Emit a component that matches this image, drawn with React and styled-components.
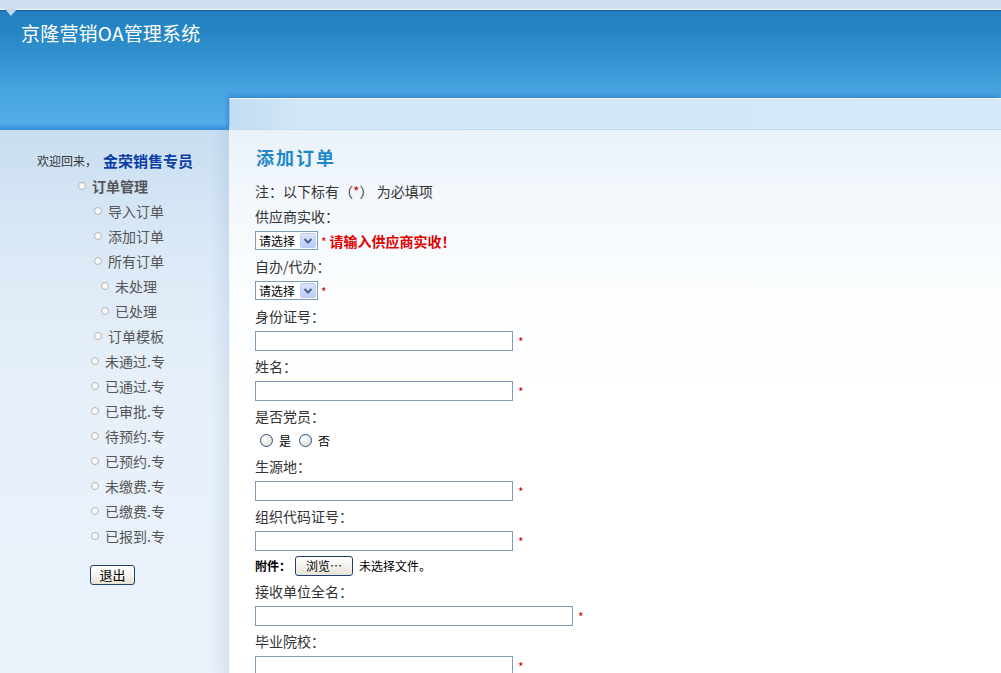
import React from "react";
import styled, { createGlobalStyle } from "styled-components";

const GlobalStyle = createGlobalStyle`
  html, body { margin: 0; padding: 0; }
  body {
    font-family: "Noto Sans CJK SC", "Noto Sans", sans-serif;
    background: #fff;
    overflow: hidden;
  }
  * { box-sizing: border-box; }
`;

const Page = styled.div`
  width: 1001px;
  height: 673px;
  overflow: hidden;
  display: flex;
  flex-direction: column;
`;

const TopStrip = styled.div`
  height: 10px;
  flex: none;
  background: #cfe0f0;
  border-bottom: 1px solid #f3f8fc;
  position: relative;
  &::after {
    content: "";
    position: absolute;
    left: 5px;
    top: 9px;
    border-left: 6px solid transparent;
    border-right: 6px solid transparent;
    border-top: 7px solid #c2d7ec;
    z-index: 3;
  }
`;

const Banner = styled.div`
  height: 88px;
  flex: none;
  border-top: 1px solid #1a5a96;
  background: linear-gradient(#2280c0 0%, #2686c4 25%, #3592d0 55%, #45a1de 85%, #4aa6e2 100%);
`;

const SiteTitle = styled.div`
  color: #fff;
  font-size: 19px;
  line-height: 24px;
  padding: 10px 0 0 21px;
  letter-spacing: 0.2px;
`;

const Body = styled.div`
  flex: 1;
  min-height: 0;
  display: flex;
`;

const LeftCol = styled.div`
  width: 229px;
  flex: none;
  display: flex;
  flex-direction: column;
`;

const BlueTail = styled.div`
  height: 32px;
  flex: none;
  background: linear-gradient(#4aa7e3 0%, #52ace8 80%, #3f97dc 92%, #3a8fd6 100%);
`;

const Sidebar = styled.div`
  flex: 1;
  padding-top: 18px;
  background:
    linear-gradient(to right, rgba(255,255,255,0) 92%, rgba(140,175,210,0.22) 100%),
    linear-gradient(#c9def1 0px, #dbe9f6 120px, #e7f0f9 260px, #eaf2fa 100%);
`;

const Welcome = styled.div`
  height: 25px;
  display: flex;
  align-items: center;
  padding-left: 37px;
  font-size: 12px;
  color: #333;
`;

const UserName = styled.span`
  margin-left: 6px;
  font-size: 15px;
  font-weight: bold;
  color: #0d3ea8;
`;

const MenuList = styled.ul`
  list-style: none;
  margin: 0;
  padding: 0;
`;

const MenuItem = styled.li`
  height: 25px;
  display: flex;
  align-items: center;
  padding-left: ${(p) => p.$indent}px;
  font-size: 14px;
  color: #555;
  font-weight: ${(p) => (p.$bold ? "bold" : "normal")};
  &::before {
    content: "";
    width: 6px;
    height: 6px;
    border: 1px solid #b4b4b4;
    border-radius: 50%;
    background: #fafafa;
    margin-right: 6px;
    flex: none;
  }
`;

const LogoutRow = styled.div`
  padding: 13px 0 0 90px;
`;

const XpButton = styled.button`
  height: 20px;
  width: ${(p) => p.$w}px;
  padding: 0;
  border: 1px solid #1f3f6c;
  border-radius: 3px;
  background: linear-gradient(#ffffff 0%, #f4f3ee 50%, #e6e3d6 100%);
  font-family: inherit;
  font-size: ${(p) => p.$fs || 12}px;
  color: #000;
  line-height: 18px;
`;

const RightCol = styled.div`
  flex: 1;
  display: flex;
  flex-direction: column;
  border-left: 1px solid #f2f8fd;
`;

const TabBar = styled.div`
  height: 32px;
  flex: none;
  border-top: 1px solid #eef6fc;
  border-bottom: 1px solid #c4daee;
  background: linear-gradient(to right, #c2dcf2 0px, #d2e7f7 70px, #d5e9f8 100%);
  box-shadow: -2px -2px 4px rgba(25, 90, 170, 0.45);
`;

const Content = styled.div`
  flex: 1;
  padding: 14px 0 0 25px;
  background: linear-gradient(#e9f2f9 0px, #f3f8fc 70px, #fbfdfe 160px, #fff 260px);
`;

const PageTitle = styled.h2`
  margin: 0 0 8px 1px;
  font-size: 18px;
  line-height: 26px;
  letter-spacing: 2px;
  font-weight: bold;
  color: #1f88c9;
`;

const Row = styled.div`
  height: 25px;
  display: flex;
  align-items: center;
  font-size: 14px;
  color: #333;
  white-space: nowrap;
`;

const RedMark = styled.span`
  color: #d40000;
`;

const Star = styled.span`
  color: #d80000;
  font-size: 12px;
  margin-left: ${(p) => p.$ml || 5}px;
  position: relative;
  top: 1px;
`;

const ErrorMsg = styled.span`
  color: #e00000;
  font-weight: bold;
  font-size: 14px;
  margin-left: 3px;
`;

const SelectBox = styled.div`
  width: 63px;
  height: 19px;
  display: flex;
  align-items: center;
  justify-content: space-between;
  border: 1px solid #7f9db9;
  background: #fff;
  font-size: 12px;
  color: #000;
  padding-left: 3px;
`;

const SelectArrow = styled.span`
  width: 16px;
  height: 15px;
  margin-right: 1px;
  display: flex;
  align-items: center;
  justify-content: center;
  border: 1px solid #b9cdf4;
  border-radius: 2px;
  background: linear-gradient(#dbe6fd, #b9cdf8);
`;

const TextInput = styled.div`
  width: ${(p) => p.$w || 258}px;
  height: 20px;
  border: 1px solid #7f9db9;
  background: #fff;
`;

const RadioGroup = styled.div`
  display: flex;
  align-items: center;
  padding-left: 5px;
  font-size: 12px;
  color: #000;
`;

const RadioDot = styled.span`
  width: 13px;
  height: 13px;
  border-radius: 50%;
  border: 1px solid #27508a;
  background: radial-gradient(circle at 35% 35%, #ffffff 0%, #e7e7e2 60%, #cfcfc8 100%);
  margin: 0 6px 0 ${(p) => p.$ml || 0}px;
  flex: none;
`;

const BoldLabel = styled.span`
  font-size: 12px;
  font-weight: bold;
  color: #000;
  margin-right: 4px;
`;

const FileNote = styled.span`
  font-size: 12px;
  color: #000;
  margin-left: 6px;
`;

const Chevron = () => (
  <svg width="10" height="8" viewBox="0 0 10 8">
    <path d="M1.5 2 L5 5.5 L8.5 2" fill="none" stroke="#4d6185" strokeWidth="2" />
  </svg>
);

const Select = () => (
  <SelectBox>
    <span>请选择</span>
    <SelectArrow>
      <Chevron />
    </SelectArrow>
  </SelectBox>
);

const menu = [
  { t: "订单管理", i: 78, b: true },
  { t: "导入订单", i: 94 },
  { t: "添加订单", i: 94 },
  { t: "所有订单", i: 94 },
  { t: "未处理", i: 101 },
  { t: "已处理", i: 101 },
  { t: "订单模板", i: 94 },
  { t: "未通过.专", i: 91 },
  { t: "已通过.专", i: 91 },
  { t: "已审批.专", i: 91 },
  { t: "待预约.专", i: 91 },
  { t: "已预约.专", i: 91 },
  { t: "未缴费.专", i: 91 },
  { t: "已缴费.专", i: 91 },
  { t: "已报到.专", i: 91 },
];

export default function App() {
  return (
    <Page>
      <GlobalStyle />
      <TopStrip />
      <Banner>
        <SiteTitle>京隆营销OA管理系统</SiteTitle>
      </Banner>
      <Body>
        <LeftCol>
          <BlueTail />
          <Sidebar>
            <Welcome>
              欢迎回来，<UserName>金荣销售专员</UserName>
            </Welcome>
            <MenuList>
              {menu.map((m) => (
                <MenuItem key={m.t} $indent={m.i} $bold={m.b}>
                  {m.t}
                </MenuItem>
              ))}
            </MenuList>
            <LogoutRow>
              <XpButton $w={45} $fs={13}>退出</XpButton>
            </LogoutRow>
          </Sidebar>
        </LeftCol>
        <RightCol>
          <TabBar />
          <Content>
            <PageTitle>添加订单</PageTitle>
            <Row>
              注：以下标有（<RedMark>*</RedMark>） 为必填项
            </Row>
            <Row>供应商实收：</Row>
            <Row>
              <Select />
              <Star $ml={3}>*</Star>
              <ErrorMsg>请输入供应商实收！</ErrorMsg>
            </Row>
            <Row>自办/代办：</Row>
            <Row>
              <Select />
              <Star $ml={3}>*</Star>
            </Row>
            <Row>身份证号：</Row>
            <Row>
              <TextInput />
              <Star>*</Star>
            </Row>
            <Row>姓名：</Row>
            <Row>
              <TextInput />
              <Star>*</Star>
            </Row>
            <Row>是否党员：</Row>
            <Row>
              <RadioGroup>
                <RadioDot />是<RadioDot $ml={8} />否
              </RadioGroup>
            </Row>
            <Row>生源地：</Row>
            <Row>
              <TextInput />
              <Star>*</Star>
            </Row>
            <Row>组织代码证号：</Row>
            <Row>
              <TextInput />
              <Star>*</Star>
            </Row>
            <Row>
              <BoldLabel>附件：</BoldLabel>
              <XpButton $w={58}>浏览…</XpButton>
              <FileNote>未选择文件。</FileNote>
            </Row>
            <Row>接收单位全名：</Row>
            <Row>
              <TextInput $w={318} />
              <Star>*</Star>
            </Row>
            <Row>毕业院校：</Row>
            <Row>
              <TextInput />
              <Star>*</Star>
            </Row>
          </Content>
        </RightCol>
      </Body>
    </Page>
  );
}
